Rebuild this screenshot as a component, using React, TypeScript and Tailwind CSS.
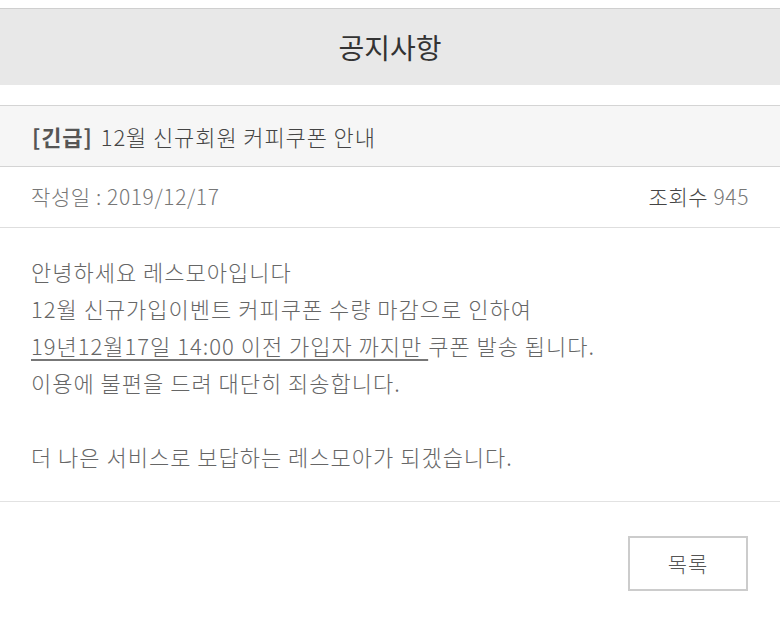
import React from 'react';

const notice = {
  tag: '[긴급]',
  title: '12월 신규회원 커피쿠폰 안내',
  date: '2019/12/17',
  views: 945,
};

export default function App() {
  return (
    <div className="w-full min-h-screen bg-white font-light font-['Noto_Sans_CJK_KR','Noto_Sans',sans-serif]">
      {/* 상단 헤더 */}
      <div className="mt-2 h-[77px] border-t border-[#cfcfcf] bg-[#e8e8e8] flex items-center justify-center">
        <h1 className="text-[28px] font-normal text-[#333]">공지사항</h1>
      </div>

      <div className="h-5" />

      {/* 제목 */}
      <div className="h-[62px] border-y border-[#d4d4d4] bg-[#f6f6f6] px-8 flex items-center text-[22px] tracking-[0.9px] text-[#444]">
        <span className="font-bold mr-2 text-[#555]">{notice.tag}</span>
        <span>{notice.title}</span>
      </div>

      {/* 작성일 / 조회수 */}
      <div className="h-[61px] border-b border-[#dedede] px-[31px] flex items-center justify-between text-[21px] tracking-[0.6px] text-[#777]">
        <span>작성일 : {notice.date}</span>
        <span>
          <span className="text-[#444]">조회수</span> {notice.views}
        </span>
      </div>

      {/* 본문 */}
      <div className="px-[31px] pt-[25px] pb-[26px] border-b border-[#e2e2e2] text-[22px] tracking-[1px] leading-[37px] text-[#666]">
        <p>안녕하세요 레스모아입니다</p>
        <p>12월 신규가입이벤트 커피쿠폰 수량 마감으로 인하여</p>
        <p>
          <span className="underline underline-offset-4 decoration-[#777]">19년12월17일 14:00 이전 가입자 까지만 </span>
          쿠폰 발송 됩니다.
        </p>
        <p>이용에 불편을 드려 대단히 죄송합니다.</p>
        <p>&nbsp;</p>
        <p>더 나은 서비스로 보답하는 레스모아가 되겠습니다.</p>
      </div>

      <div className="flex justify-end pr-8 pt-[34px]">
        <button className="w-[120px] h-[55px] border-2 border-[#cccccc] bg-white text-[21px] tracking-[1px] text-[#555]">
          목록
        </button>
      </div>
    </div>
  );
}
